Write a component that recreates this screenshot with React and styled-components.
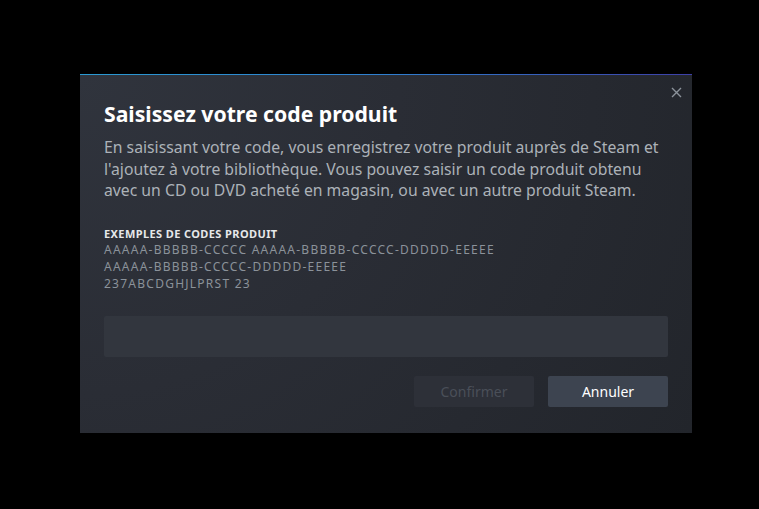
import React from 'react'
import styled, { createGlobalStyle } from 'styled-components'

const Global = createGlobalStyle`
    html, body {
        margin: 0;
        padding: 0;
        background: #000;
        height: 100%;
    }
    #root {
        height: 100%;
    }
`

const Page = styled.div`
    width: 759px;
    height: 509px;
    box-sizing: border-box;
    padding: 74px 0 0 80px;
    font-family: 'Noto Sans', 'Open Sans', sans-serif;
`

const Dialog = styled.div`
    position: relative;
    width: 612px;
    height: 359px;
    box-sizing: border-box;
    padding: 25px 24px 0 24px;
    background: radial-gradient(circle at 0% 0%, #30343d 0%, #2a2d35 45%, #22252b 100%);
    display: flex;
    flex-direction: column;

    &::before {
        content: '';
        position: absolute;
        left: 0;
        right: 0;
        top: 0;
        height: 1px;
        background: linear-gradient(90deg, #2a9ad2 0%, #2f7fd0 50%, #3d40a8 100%);
    }
`

const Close = styled.button`
    position: absolute;
    top: 11px;
    right: 9px;
    width: 14px;
    height: 14px;
    padding: 0;
    border: none;
    background: none;
    cursor: pointer;
    display: flex;
    align-items: center;
    justify-content: center;
`

const Title = styled.h1`
    margin: 0;
    font-size: 21.2px;
    line-height: 30px;
    font-weight: 700;
    color: #ffffff;
`

const Body = styled.p`
    margin: 8px 0 0 0;
    font-size: 15.75px;
    line-height: 21.5px;
    color: #acb2b8;
`

const Examples = styled.div`
    margin-top: 24px;
    display: flex;
    flex-direction: column;
`

const Label = styled.div`
    font-size: 11px;
    line-height: 15px;
    font-weight: 700;
    letter-spacing: 0.4px;
    text-transform: uppercase;
    color: #e6e8ea;
`

const Code = styled.div`
    font-size: 12px;
    line-height: 17px;
    letter-spacing: 1.25px;
    color: #8b929a;
`

const Input = styled.input`
    margin-top: 24px;
    height: 41px;
    box-sizing: border-box;
    border: none;
    border-radius: 2px;
    outline: none;
    padding: 0 12px;
    background: #32363e;
    color: #fff;
    font-family: inherit;
    font-size: 14px;
`

const Actions = styled.div`
    margin-top: 19px;
    display: flex;
    justify-content: flex-end;
    gap: 14px;
`

const Button = styled.button`
    width: 120px;
    height: 31px;
    border: none;
    border-radius: 2px;
    font-family: inherit;
    font-size: 14px;
    background: ${props => (props.disabled ? '#2d3038' : '#3d4450')};
    color: ${props => (props.disabled ? '#4a4f58' : '#ffffff')};
    cursor: ${props => (props.disabled ? 'default' : 'pointer')};
`

export default function App() {
    return (
        <Page>
            <Global />
            <Dialog>
                <Close aria-label="Fermer">
                    <svg width="11" height="11" viewBox="0 0 11 11">
                        <path
                            d="M1 1 L10 10 M10 1 L1 10"
                            stroke="#8b929a"
                            strokeWidth="1.4"
                        />
                    </svg>
                </Close>
                <Title>Saisissez votre code produit</Title>
                <Body>
                    En saisissant votre code, vous enregistrez votre produit
                    auprès de Steam et l'ajoutez à votre bibliothèque. Vous
                    pouvez saisir un code produit obtenu avec un CD ou DVD
                    acheté en magasin, ou avec un autre produit Steam.
                </Body>
                <Examples>
                    <Label>Exemples de codes produit</Label>
                    <Code>AAAAA-BBBBB-CCCCC AAAAA-BBBBB-CCCCC-DDDDD-EEEEE</Code>
                    <Code>AAAAA-BBBBB-CCCCC-DDDDD-EEEEE</Code>
                    <Code>237ABCDGHJLPRST 23</Code>
                </Examples>
                <Input type="text" />
                <Actions>
                    <Button disabled>Confirmer</Button>
                    <Button>Annuler</Button>
                </Actions>
            </Dialog>
        </Page>
    )
}
